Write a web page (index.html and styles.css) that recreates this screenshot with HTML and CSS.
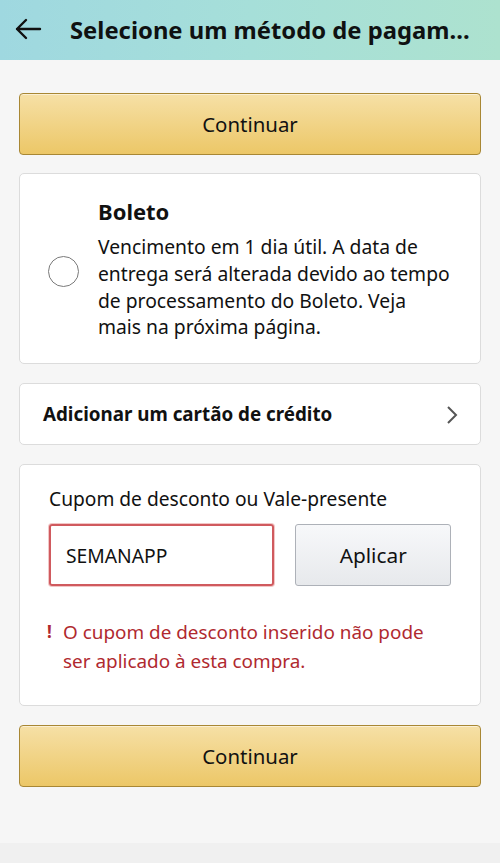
FILE: index.html
```html
<!DOCTYPE html>
<html lang="pt">
<head>
<meta charset="utf-8">
<link rel="stylesheet" href="styles.css">
</head>
<body>
<header class="topbar">
  <svg class="back" width="28" height="22" viewBox="0 0 28 22"><path d="M26 11H3M12 2L3 11l9 9" fill="none" stroke="#111" stroke-width="2.4" stroke-linecap="round" stroke-linejoin="round"/></svg>
  <h1 class="title">Selecione um método de pagam...</h1>
</header>
<main class="content">
  <button class="btn-primary">Continuar</button>
  <section class="card boleto">
    <span class="radio"></span>
    <div class="boleto-text">
      <h2 class="boleto-title">Boleto</h2>
      <p class="boleto-desc">Vencimento em 1 dia útil. A data de entrega será alterada devido ao tempo de processamento do Boleto. Veja mais na próxima página.</p>
    </div>
  </section>
  <section class="card add-card">
    <span class="add-label">Adicionar um cartão de crédito</span>
    <svg class="chev" width="12" height="20" viewBox="0 0 12 20"><path d="M2 2l8 8-8 8" fill="none" stroke="#555" stroke-width="2"/></svg>
  </section>
  <section class="card coupon">
    <label class="coupon-label">Cupom de desconto ou Vale-presente</label>
    <div class="coupon-row">
      <div class="coupon-input">SEMANAPP</div>
      <button class="btn-secondary">Aplicar</button>
    </div>
    <div class="error">
      <span class="error-icon">!</span>
      <p class="error-text">O cupom de desconto inserido não pode ser aplicado à esta compra.</p>
    </div>
  </section>
  <button class="btn-primary">Continuar</button>
</main>
<div class="bottom-band"></div>
</body>
</html>
```
FILE: styles.css
```css
* { box-sizing: border-box; }
html, body { margin: 0; padding: 0; }
body {
  width: 500px;
  height: 863px;
  background: #f6f6f6;
  font-family: "Noto Sans", "Open Sans", sans-serif;
  color: #111;
  display: flex;
  flex-direction: column;
  overflow: hidden;
}
.topbar {
  height: 60px;
  flex: none;
  display: flex;
  align-items: center;
  background: linear-gradient(90deg, #9fd8e0 0%, #a6dfd9 50%, #ade2cf 100%);
  padding-left: 14px;
}
.back { flex: none; margin-top: -2px; }
.title {
  margin: 0 0 0 28px;
  font-size: 23.8px;
  font-weight: 700;
  color: #0f1111;
  white-space: nowrap;
}
.content {
  flex: 1;
  padding: 33px 19px 0;
  display: flex;
  flex-direction: column;
}
.btn-primary {
  height: 62px;
  width: 100%;
  border: 1px solid #a88734;
  border-radius: 4px;
  background: linear-gradient(180deg, #f6e0a6 0%, #ecc767 100%);
  font-family: inherit;
  font-size: 20.4px;
  color: #111;
  padding: 0;
  box-shadow: 0 1px 0 rgba(255,255,255,.5) inset;
}
.card {
  background: #fff;
  border: 1px solid #dcdcdc;
  border-radius: 5px;
}
.boleto {
  margin-top: 18px;
  height: 191px;
  display: flex;
  align-items: center;
  padding: 0 0 0 28px;
}
.radio {
  flex: none;
  width: 31px;
  height: 31px;
  border: 1.5px solid #7a7a7a;
  border-radius: 50%;
  margin-top: 6px;
}
.boleto-text { margin-left: 19px; margin-top: 1px; }
.boleto-title {
  margin: 0 0 9px;
  font-size: 22px;
  font-weight: 700;
  line-height: 28px;
}
.boleto-desc {
  margin: 0;
  font-size: 19.3px;
  line-height: 26.7px;
  color: #111;
  width: 352px;
}
.add-card {
  margin-top: 19px;
  height: 62px;
  display: flex;
  align-items: center;
  justify-content: space-between;
  padding: 0 22px 0 23px;
}
.add-label {
  font-size: 18.8px;
  font-weight: 700;
}
.chev { margin-top: 1px; }
.coupon {
  margin-top: 19px;
  height: 242px;
  padding: 22px 29px 0 29px;
}
.coupon-label {
  display: block;
  font-size: 19.2px;
  line-height: 24px;
  color: #111;
}
.coupon-row {
  margin-top: 13px;
  display: flex;
  gap: 21px;
}
.coupon-input {
  width: 226px;
  height: 62px;
  border: 2px solid #d05a5e;
  border-radius: 3px;
  box-shadow: 0 0 0 1px #f2c6c6;
  display: flex;
  align-items: center;
  padding-left: 15px;
  font-size: 19.3px;
  color: #111;
}
.btn-secondary {
  width: 156px;
  height: 62px;
  border: 1px solid #adb1b8;
  border-radius: 3px;
  background: linear-gradient(180deg, #f7f8fa 0%, #e7e9ec 100%);
  font-family: inherit;
  font-size: 20.8px;
  color: #111;
  padding: 0;
}
.error {
  margin-top: 32px;
  display: flex;
  color: #b0292f;
}
.error-icon {
  flex: none;
  width: 16px;
  font-weight: 700;
  font-size: 17px;
  line-height: 28.5px;
  margin-left: -2px;
}
.error-text {
  margin: 0;
  font-size: 18.9px;
  line-height: 28.5px;
  width: 375px;
}
.content > .btn-primary:last-child { margin-top: 19px; }
.bottom-band {
  height: 20px;
  flex: none;
  background: #f0f0f0;
}
```
